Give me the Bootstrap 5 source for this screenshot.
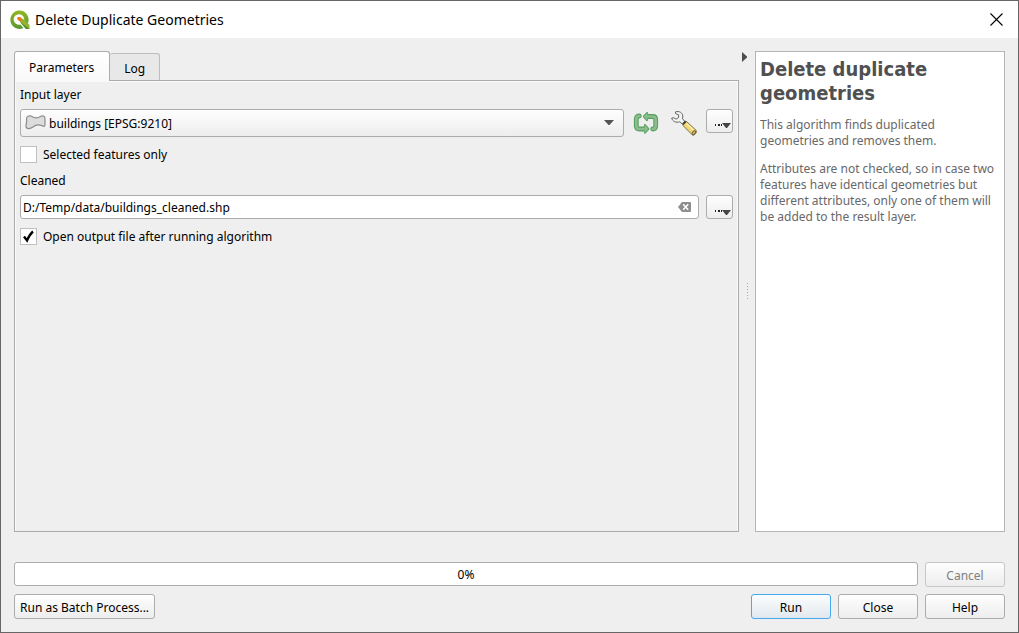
<!DOCTYPE html>
<html lang="en">
<head>
<meta charset="utf-8">
<meta name="viewport" content="width=device-width, initial-scale=1">
<title>Delete Duplicate Geometries</title>
<link href="https://cdn.jsdelivr.net/npm/bootstrap@5.3.0/dist/css/bootstrap.min.css" rel="stylesheet">
<style>
  body { font: 12px/16px "Noto Sans", sans-serif; color: #000; background: #efefef; }
  .dialog { border: 1px solid #666; }
  .titlebar { height: 37px; padding: 0 15px 0 8px; font: 14px/20px "Noto Sans", sans-serif; gap: 5px; }
  .titlebar h1 { font: inherit; }
  .content { padding: 13px; }
  .bare { border: 0; padding: 0; background: none; line-height: 0; display: block; }
  .upper { padding-bottom: 30px; }
  .help { width: 250px; border: 1px solid #b5b5b5; padding: 5px 4px; color: #686868; }
  .help h2 { font: bold 20px/24px "DejaVu Sans Condensed", "DejaVu Sans", sans-serif; color: #505050; margin-bottom: 12px; }
  .help p { margin-bottom: 12px; }
  .splitter { width: 16px; display: grid; }
  .splitter > * { grid-area: 1 / 1; }
  .collapse-help { padding: 1px 0 0 3px; }
  .tool-tabs { border: 0; height: 29px; align-items: flex-end; z-index: 1; }
  .tool-tabs .nav-link { color: #000; border: 1px solid #bdbdbd; border-radius: 3px 3px 0 0; margin: 0; padding: 0 14px; height: 27px; line-height: 30px; background: #e8e8e8; border-left: 0; border-bottom: 0; }
  .tool-tabs .nav-link.active { height: 30px; line-height: 32px; margin-bottom: -1px; padding: 0 15px 0 14px; color: #000; background: linear-gradient(#fff, #f9f9f9); border-color: #acacac; border-left: 1px solid #acacac; }
  .pane { border: 1px solid #acacac; box-shadow: inset 1px 1px #fafafa, inset -1px 0 #fafafa; padding: 6px 5px; }
  .btn-tool { --bs-btn-border-radius: 3px; --bs-btn-border-color: #acacac; --bs-btn-color: #000; --bs-btn-disabled-color: #808080; --bs-btn-disabled-border-color: #c6c6c6; --bs-btn-disabled-opacity: 1; --bs-btn-hover-border-color: #45a9f0; --bs-btn-hover-color: #000; font-size: 12px; line-height: 16px; background: linear-gradient(#fefefe, #ededed); padding: 2px 5px 0; height: 25px; }
  .btn-wide { width: 80px; }
  .btn-default { --bs-btn-border-color: #45a9f0; background: linear-gradient(#fcfdfe, #e1e8ed); }
  .btn-more { width: 27px; height: 24px; padding: 0; display: block; }
  .row-tight { display: flex; gap: 7px; }
  .row-progress { margin-bottom: 7px; }
  .row-layer { display: flex; gap: 9px; margin-top: 6px; }
  .row-file { margin-top: 6px; }
  .advanced { padding-left: 3px; }
  .next-label { margin-top: 10px; }
  .field { font-size: 12px; line-height: 16px; color: #000; border: 1px solid #acacac; border-radius: 3px; }
  select.field { height: 28px; padding: 2px 28px 0; background: linear-gradient(#fefefe, #ededed); }
  input.field { height: 24px; padding: 1px 28px 0 2px; background: #fff; }
  .over-left { position: absolute; left: 5px; top: 6px; pointer-events: none; }
  .over-right { position: absolute; right: 10px; top: 11px; pointer-events: none; }
  .over-clear { position: absolute; right: 8px; top: 7px; }
  .tick { display: flex; align-items: center; gap: 6px; padding: 0; margin: 9px 0 0; min-height: 17px; }
  .tick .form-check-input { width: 17px; height: 17px; margin: 0; float: none; border: 1px solid #c0c0c0; border-radius: 0; background-color: #fff; background-size: 17px 17px; }
  .tick .form-check-input:checked { background-color: #fff; border-color: #c0c0c0; background-image: url("data:image/svg+xml,%3Csvg xmlns='http://www.w3.org/2000/svg' viewBox='0 0 17 17'%3E%3Cpath d='M4 8.5L7 12.5C8.500 9 10 6 13 3.500' fill='none' stroke='%23000' stroke-width='2.300'/%3E%3C/svg%3E"); }
  .run-bar { height: 24px; border: 1px solid #acacac; border-radius: 3px; background: #fff; padding-top: 4px; }
</style>
</head>
<body>
<div class="dialog d-flex flex-column min-vh-100">
  <header class="titlebar bg-white d-flex align-items-center">
    <svg width="21" height="20" viewBox="0 0 21 20" aria-hidden="true">
      <defs><linearGradient id="q" x1="0" y1="0" x2="0" y2="1"><stop offset="0" stop-color="#93b823"/><stop offset="1" stop-color="#589632"/></linearGradient></defs>
      <path d="M10 .5a9.200 9.200 0 1 0 4.500 17.500l-3.200-3.400a5.300 5.300 0 1 1 3.800-4l3.400 3.400A9.200 9.200 0 0 0 10 .5z" fill="url(#q)"/>
      <path d="M11 12V8.800h3l6.500 6.200v4h-3.500z" fill="#8fb52e"/>
      <path d="M11 12l6 7h3.500z" fill="#4f8b2c"/>
      <path d="M8.500 7h2.700l2 2-2 2.800-2.900-2.300z" fill="#ee7913"/>
    </svg>
    <h1 class="m-0 flex-grow-1">Delete Duplicate Geometries</h1>
    <button type="button" class="bare" aria-label="Close window"><svg width="13" height="13" viewBox="0 0 13 13"><path d="M.5.5l12 12M12.500.5l-12 12" stroke="#000" stroke-width="1.100"/></svg></button>
  </header>

  <div class="content flex-grow-1 d-flex flex-column">
    <main class="upper d-flex flex-grow-1">
      <div class="flex-grow-1 d-flex flex-column">
        <ul class="nav nav-tabs tool-tabs" role="tablist">
          <li class="nav-item" role="presentation"><button class="nav-link active" id="tab-par" data-bs-toggle="tab" data-bs-target="#par" type="button" role="tab" aria-controls="par" aria-selected="true">Parameters</button></li>
          <li class="nav-item" role="presentation"><button class="nav-link" id="tab-log" data-bs-toggle="tab" data-bs-target="#log" type="button" role="tab" aria-controls="log" aria-selected="false">Log</button></li>
        </ul>
        <div class="tab-content pane flex-grow-1">
          <form class="tab-pane active" id="par" role="tabpanel" aria-labelledby="tab-par">
            <label for="layer" class="d-block">Input layer</label>
            <div class="row-layer">
              <div class="position-relative flex-grow-1">
                <select id="layer" class="field form-select"><option>buildings [EPSG:9210]</option></select>
                <svg class="over-left" width="21" height="15" viewBox="0 0 21 15"><path d="M1.500 4C1.500 1 4 .5 6.500 1.200C10 3.200 12 3.500 16 1.200C18.500.200 20 1.500 20 4V9.500C20 12 18.500 11.500 16.500 10.500C13.500 9.500 11 9.500 8 12C4.500 14.500 1 14 1 11C1 9 2 7.500 1.500 4z" fill="#dcdcdc" stroke="#8c8c8c" stroke-width="1.200"/></svg>
                <svg class="over-right" width="10" height="6" viewBox="0 0 10 6"><path d="M0 0h10L5.500 5h-1z" fill="#555"/></svg>
              </div>
              <button type="button" class="bare align-self-center" aria-label="Iterate over this layer">
                <svg width="26" height="24" viewBox="-1 -1 26 24">
                  <g fill="none" stroke-linecap="round" stroke-linejoin="round">
                    <g stroke="#56a061">
                      <path d="M5.300 4Q2.300 4 2.300 7V14Q2.300 17 5.300 17H10M18.700 17Q21.700 17 21.700 14V7.500Q21.700 4.500 18.700 4.500H14" stroke-width="4.800"/>
                      <path d="M11 13.200L14.300 17L11 20.600zM13 1.200L9.900 4.500L13 8z" stroke-width="2.200"/>
                    </g>
                    <g stroke="#8bbd8d">
                      <path d="M5.300 4Q2.300 4 2.300 7V14Q2.300 17 5.300 17H11M18.700 17Q21.700 17 21.700 14V7.500Q21.700 4.500 18.700 4.500H13" stroke-width="2.600"/>
                      <path d="M11 13.200L14.300 17L11 20.600zM13 1.200L9.900 4.500L13 8z" stroke-width=".4" fill="#8bbd8d"/>
                    </g>
                  </g>
                </svg>
              </button>
              <button type="button" class="bare advanced align-self-center" aria-label="Advanced options">
                <svg width="26" height="25" viewBox="0 0 26 25">
                  <path d="M4.500.8C8-.2 11.500 1.500 11.800 5L11.500 7.800L14.200 10.800L11.500 13.300L8.700 10.800C5 12 1.500 10.500.7 7L2.800 6.800L5 8.200L7.700 6.500L7.600 3.800L4.500 2.500z" fill="#f1f2f4" stroke="#666" stroke-linejoin="round"/>
                  <path d="M15.300 10.300L25.300 19.500Q26 22.500 22 24.500L11.800 14.400z" fill="#f2d670" stroke="#7d7350"/>
                  <path d="M15.500 12.500L23 19.500" stroke="#fbeeb0" stroke-width="1.500"/>
                  <path d="M11.800 13.300L14.800 10.300" stroke="#444" stroke-width="2"/>
                  <ellipse cx="23" cy="21.700" rx="1.400" ry="2.200" transform="rotate(40 23 21.700)" fill="#d8b94f" stroke="#696040"/>
                </svg>
              </button>
              <button type="button" class="btn btn-tool btn-more" aria-label="More layer options"><svg width="25" height="22" viewBox="0 0 25 22" class="d-block"><path d="M8 14h1v2H8zM11 14h2v2h-2zM14 14h1v2h-1z" fill="#222"/><path d="M15 13h9l-4 5h-1z" fill="#444"/></svg></button>
            </div>
            <div class="form-check tick"><input class="form-check-input" type="checkbox" id="sel"><label for="sel">Selected features only</label></div>
            <label for="out" class="d-block next-label">Cleaned</label>
            <div class="row-tight row-file">
              <div class="position-relative flex-grow-1">
                <input id="out" type="text" class="field form-control" value="D:/Temp/data/buildings_cleaned.shp">
                <button type="button" class="bare over-clear" aria-label="Clear"><svg width="13" height="10" viewBox="0 0 13 10"><path d="M4 0h8q1 0 1 1v8q0 1-1 1H4L0 5z" fill="#8e8e8e"/><path d="M5.200 2.200l5 5.600M10.200 2.200l-5 5.600" stroke="#fff" stroke-width="1.500"/></svg></button>
              </div>
              <button type="button" class="btn btn-tool btn-more" aria-label="More output options"><svg width="25" height="22" viewBox="0 0 25 22" class="d-block"><path d="M8 14h1v2H8zM11 14h2v2h-2zM14 14h1v2h-1z" fill="#222"/><path d="M15 14h9l-4 5h-1z" fill="#444"/></svg></button>
            </div>
            <div class="form-check tick"><input class="form-check-input" type="checkbox" id="open" checked><label for="open">Open output file after running algorithm</label></div>
          </form>
          <div class="tab-pane" id="log" role="tabpanel" aria-labelledby="tab-log"></div>
        </div>
      </div>
      <div class="splitter">
        <button type="button" class="bare collapse-help align-self-start" aria-label="Collapse help"><svg class="d-block" width="6" height="10" viewBox="0 0 6 10"><path d="M0 0l5 4.500v1L0 10z" fill="#4d4d4d"/></svg></button>
        <svg class="align-self-center ms-2" width="2" height="17" viewBox="0 0 2 17"><path d="M.5 0v17" stroke="#a8a8a8" stroke-dasharray="1 2"/></svg>
      </div>
      <aside class="help bg-white">
        <h2>Delete duplicate geometries</h2>
        <p>This algorithm finds duplicated geometries and removes them.</p>
        <p>Attributes are not checked, so in case two features have identical geometries but different attributes, only one of them will be added to the result layer.</p>
      </aside>
    </main>
    <footer>
      <div class="row-tight row-progress">
        <div class="run-bar flex-grow-1 text-center" role="progressbar" aria-label="Progress" aria-valuenow="0" aria-valuemin="0" aria-valuemax="100">0%</div>
        <button type="button" class="btn btn-tool btn-wide" disabled>Cancel</button>
      </div>
      <div class="row-tight">
        <button type="button" class="btn btn-tool me-auto">Run as Batch Process...</button>
        <button type="button" class="btn btn-tool btn-wide btn-default">Run</button>
        <button type="button" class="btn btn-tool btn-wide">Close</button>
        <button type="button" class="btn btn-tool btn-wide">Help</button>
      </div>
    </footer>
  </div>
</div>
<script src="https://cdn.jsdelivr.net/npm/bootstrap@5.3.0/dist/js/bootstrap.bundle.min.js"></script>
</body>
</html>
